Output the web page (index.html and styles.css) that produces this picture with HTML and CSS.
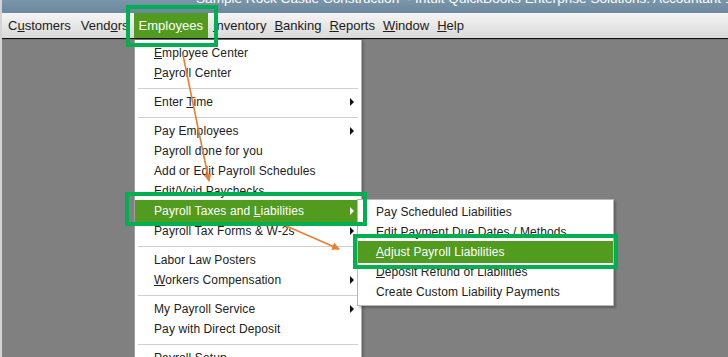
FILE: index.html
```html
<!DOCTYPE html>
<html lang="en">
<head>
    <meta charset="UTF-8">
    <meta name="viewport" content="width=device-width, initial-scale=1.0">
    <title>QuickBooks - Employees menu</title>
    <link rel="stylesheet" href="styles.css">
</head>
<body>
    <div class="window">
        <div class="titlebar">
            <span class="title-text">Sample Rock Castle Construction&nbsp; - Intuit QuickBooks Enterprise Solutions: Accountant 18.0</span>
        </div>
        <div class="menubar">
            <span class="menu-item">C<u>u</u>stomers</span>
            <span class="menu-item">Vend<u>o</u>rs</span>
            <span class="menu-item active">Emplo<u>y</u>ees</span>
            <span class="menu-item"><u>I</u>nventory</span>
            <span class="menu-item"><u>B</u>anking</span>
            <span class="menu-item"><u>R</u>eports</span>
            <span class="menu-item"><u>W</u>indow</span>
            <span class="menu-item"><u>H</u>elp</span>
        </div>
        <div class="workspace"></div>

        <div class="dropdown">
            <div class="row"><span><u>E</u>mployee Center</span></div>
            <div class="row"><span><u>P</u>ayroll Center</span></div>
            <div class="sep"></div>
            <div class="row"><span>Enter <u>T</u>ime</span><i class="caret"></i></div>
            <div class="sep"></div>
            <div class="row"><span>Pay Employees</span><i class="caret"></i></div>
            <div class="row"><span>Payroll done for you</span></div>
            <div class="row"><span>Add or Edit Payroll Schedules</span></div>
            <div class="row"><span>Edit/Void Paychecks</span></div>
            <div class="row selected"><span>Payroll Taxes and <u>L</u>iabilities</span><i class="caret"></i></div>
            <div class="row"><span>Payroll Tax Forms &amp; W-2s</span><i class="caret"></i></div>
            <div class="sep"></div>
            <div class="row"><span>Labor Law Posters</span></div>
            <div class="row"><span><u>W</u>orkers Compensation</span><i class="caret"></i></div>
            <div class="sep"></div>
            <div class="row"><span>My Payroll Service</span><i class="caret"></i></div>
            <div class="row"><span>Pay with Direct Deposit</span></div>
            <div class="sep"></div>
            <div class="row"><span>Payroll Setup</span></div>
        </div>

        <div class="submenu">
            <div class="row"><span>Pay Scheduled Liabilities</span></div>
            <div class="row"><span>Edit Payment Due Dates / Methods</span></div>
            <div class="row selected"><span><u>A</u>djust Payroll Liabilities</span></div>
            <div class="row"><span><u>D</u>eposit Refund of Liabilities</span></div>
            <div class="row"><span>Create Custom Liability Payments</span></div>
        </div>

        <svg class="annotations" width="728" height="357" viewBox="0 0 728 357">
            <defs>
                <marker id="head" markerWidth="8" markerHeight="8" refX="7" refY="4" orient="auto" markerUnits="userSpaceOnUse">
                    <path d="M0,0 L8,4 L0,8 Z" fill="#ed7d31"/>
                </marker>
            </defs>
            <line x1="183" y1="55" x2="209" y2="181" stroke="#ed7d31" stroke-width="1.6" marker-end="url(#head)"/>
            <line x1="284" y1="225" x2="339" y2="249" stroke="#ed7d31" stroke-width="1.6" marker-end="url(#head)"/>
            <rect x="128" y="7" width="88" height="38" fill="none" stroke="#00b050" stroke-width="4"/>
            <rect x="127" y="194" width="238" height="30" fill="none" stroke="#00b050" stroke-width="4"/>
            <rect x="355" y="236" width="261" height="31" fill="none" stroke="#00b050" stroke-width="4"/>
        </svg>
    </div>
</body>
</html>
```

FILE: styles.css
```css
body {
    margin: 0;
    font-family: "Liberation Sans", Arial, sans-serif;
    background-color: #808080;
    overflow: hidden;
}
.window {
    position: relative;
    width: 728px;
    height: 357px;
    display: flex;
    flex-direction: column;
    border-left: 2px solid #d4d4d4;
    box-sizing: border-box;
}
.titlebar {
    height: 13px;
    background: linear-gradient(#7b96aa, #6a879d);
    overflow: hidden;
    padding-left: 194px;
    white-space: nowrap;
}
.title-text {
    display: block;
    color: #ffffff;
    font-size: 13.6px;
    line-height: 14px;
    margin-top: -8px;
}
.menubar {
    height: 25px;
    display: flex;
    align-items: stretch;
    padding-left: 1px;
    background: linear-gradient(#f5f5f5, #d9d9d9);
    border-bottom: 1px solid #111111;
}
.menu-item {
    display: flex;
    align-items: center;
    padding: 0 5px;
    font-size: 13px;
    color: #1b1b1b;
}
.menu-item.active {
    background-color: #519b1f;
    color: #ffffff;
}
.menu-item:nth-child(n+4) {
    padding: 0 4px;
}
.menu-item:nth-child(4) {
    padding-left: 5px;
}
.workspace {
    flex: 1;
    background-color: #808080;
    border-top: 1px solid #747474;
}
.dropdown {
    position: absolute;
    left: 132px;
    top: 40px;
    width: 226px;
    padding-top: 3px;
    background: #ffffff;
    border-left: 1px solid #a0a0a0;
    border-right: 1px solid #b0b0b0;
    box-shadow: 2px 0 2px rgba(0, 0, 0, 0.2);
}
.row {
    height: 20px;
    display: flex;
    align-items: center;
    justify-content: space-between;
    padding: 0 7px 0 19px;
    font-size: 12px;
    letter-spacing: 0.1px;
    color: #222222;
    white-space: nowrap;
}
.row u {
    text-underline-offset: 1px;
}
.row.selected {
    height: 22px;
    margin: -1px 0;
    background-color: #519b1f;
    color: #ffffff;
}
.sep {
    height: 1px;
    margin: 5px 3px 3px 3px;
    background: #cfcfcf;
}
.caret {
    width: 0;
    height: 0;
    border-top: 4px solid transparent;
    border-bottom: 4px solid transparent;
    border-left: 4px solid #111111;
}
.selected .caret {
    border-left-color: #ffffff;
}
.submenu {
    position: absolute;
    left: 355px;
    top: 199px;
    width: 255px;
    padding: 2px 0 3px 0;
    background: #ffffff;
    border: 1px solid #b8b8b8;
    box-shadow: 2px 2px 2px rgba(0, 0, 0, 0.25);
}
.submenu .row {
    padding-left: 18px;
}
.annotations {
    position: absolute;
    left: -2px;
    top: 0;
    pointer-events: none;
}
```
